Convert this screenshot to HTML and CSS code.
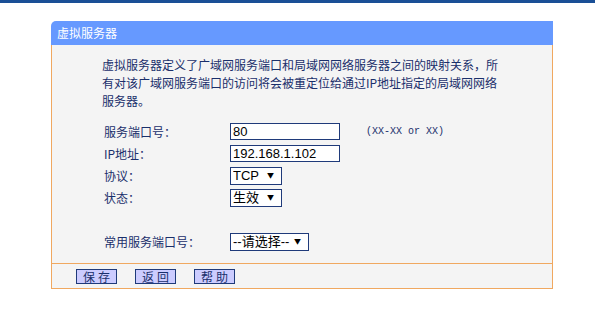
FILE: index.html
```html
<!DOCTYPE html>
<html lang="zh-CN">
<head>
    <meta charset="UTF-8">
    <title>虚拟服务器</title>
    <link rel="stylesheet" href="styles.css">
</head>
<body>
    <div class="top-bar"></div>

    <div class="panel">
        <div class="panel-title">虚拟服务器</div>

        <div class="panel-body">
            <p class="desc">虚拟服务器定义了广域网服务端口和局域网网络服务器之间的映射关系，所<br>有对该广域网服务端口的访问将会被重定位给通过IP地址指定的局域网网络<br>服务器。</p>

            <div class="form">
                <div class="row">
                    <span class="label">服务端口号：</span>
                    <input class="text-input" type="text" value="80">
                    <span class="hint">(XX-XX or XX)</span>
                </div>
                <div class="row">
                    <span class="label">IP地址：</span>
                    <input class="text-input" type="text" value="192.168.1.102">
                </div>
                <div class="row">
                    <span class="label">协议：</span>
                    <span class="select-wrap">
                        <select class="select small">
                            <option>TCP</option>
                            <option>UDP</option>
                            <option>ALL</option>
                        </select>
                    </span>
                </div>
                <div class="row">
                    <span class="label">状态：</span>
                    <span class="select-wrap">
                        <select class="select small">
                            <option>生效</option>
                            <option>失效</option>
                        </select>
                    </span>
                </div>
                <div class="row"></div>
                <div class="row">
                    <span class="label">常用服务端口号：</span>
                    <span class="select-wrap">
                        <select class="select wide">
                            <option>--请选择--</option>
                            <option>DNS</option>
                            <option>FTP</option>
                            <option>HTTP</option>
                        </select>
                    </span>
                </div>
            </div>
        </div>

        <div class="panel-footer">
            <button class="btn">保存</button>
            <button class="btn">返回</button>
            <button class="btn">帮助</button>
        </div>
    </div>
</body>
</html>
```

FILE: styles.css
```css
body {
    margin: 0;
    background: #ffffff;
    font-family: "Noto Sans CJK SC", "Liberation Sans", sans-serif;
    font-size: 12px;
    color: #1a2f6b;
}
.top-bar {
    height: 3px;
    background: #1a4f96;
}
.panel {
    width: 502px;
    margin: 18px 0 0 51px;
}
.panel-title {
    height: 24px;
    line-height: 24px;
    padding-left: 6px;
    background: #6699ff;
    color: #ffffff;
    font-size: 12px;
    border-top-left-radius: 5px;
}
.panel-body {
    background: #f4f4f4;
    border-left: 1px solid #f0a860;
    border-right: 1px solid #f0a860;
    border-bottom: 1px solid #f0a860;
    padding: 11px 0 11px 0;
}
.desc {
    margin: 0 0 0 50px;
    line-height: 18px;
    white-space: nowrap;
}
.form {
    margin: 10px 0 0 52px;
}
.row {
    display: flex;
    align-items: center;
    height: 22px;
}
.label {
    width: 126px;
}
.text-input {
    box-sizing: border-box;
    width: 110px;
    height: 17px;
    margin: 0;
    padding: 0 2px;
    border: 1px solid #1f3a7a;
    background: #ffffff;
    font-family: "Liberation Sans", Arial, sans-serif;
    font-size: 13px;
    color: #000000;
    outline: none;
}
.hint {
    margin-left: 26px;
    font-family: "Liberation Mono", monospace;
    font-size: 10px;
    color: #1a2f6b;
}
.select-wrap {
    position: relative;
    display: inline-block;
}
.select-wrap::after {
    content: "▼";
    position: absolute;
    right: 8px;
    top: 4px;
    font-size: 7px;
    color: #000000;
    pointer-events: none;
}
.select {
    appearance: none;
    -webkit-appearance: none;
    box-sizing: border-box;
    height: 18px;
    margin: 0;
    padding: 0 0 0 2px;
    border: 1px solid #1f3a7a;
    border-radius: 0;
    background: #ffffff;
    font-family: "Liberation Sans", "Noto Sans CJK SC", sans-serif;
    font-size: 13px;
    line-height: 16px;
    color: #000000;
}
.select.small {
    width: 52px;
}
.select.wide {
    width: 79px;
}
.panel-footer {
    display: flex;
    align-items: center;
    gap: 18px;
    height: 24px;
    padding-left: 24px;
    background: #f4f4f4;
    border-left: 1px solid #f0a860;
    border-right: 1px solid #f0a860;
    border-bottom: 1px solid #f0a860;
}
.btn {
    box-sizing: border-box;
    width: 41px;
    height: 15px;
    padding: 0;
    border: 1px solid #1f3a7a;
    background: #ccccff;
    font-family: "Noto Sans CJK SC", sans-serif;
    font-size: 12px;
    line-height: 13px;
    letter-spacing: 3px;
    text-indent: 3px;
    color: #1a2f6b;
    cursor: pointer;
}
```
